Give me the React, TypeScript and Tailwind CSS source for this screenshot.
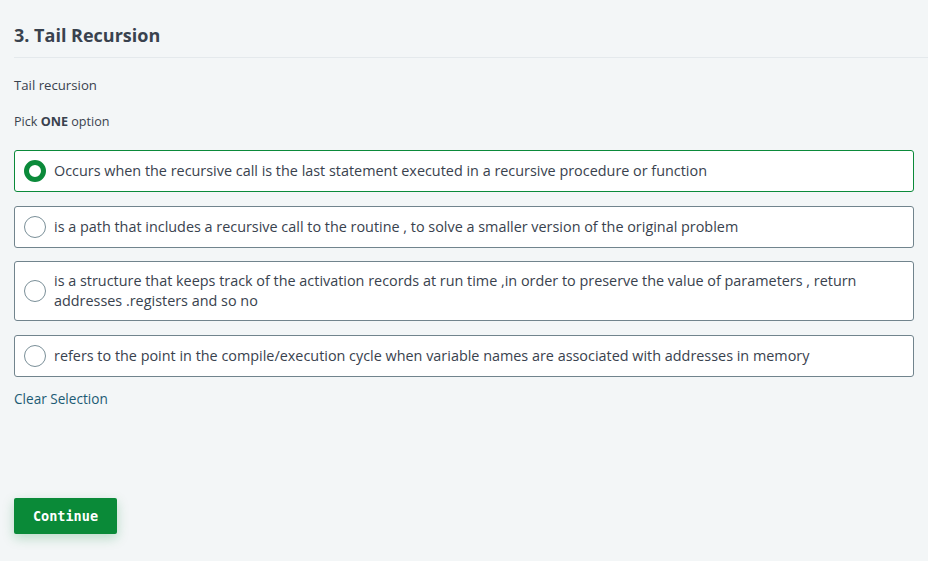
import { useState } from 'react';

const options = [
  'Occurs when the recursive call is the last statement executed in a recursive procedure or function',
  'is a path that includes a recursive call to the routine , to solve a smaller version of the original problem',
  'is a structure that keeps track of the activation records at run time ,in order to preserve the value of parameters , return addresses .registers and so no',
  'refers to the point in the compile/execution cycle when variable names are associated with addresses in memory',
];

export default function App() {
  const [selected, setSelected] = useState<number | null>(0);

  return (
    <div className="min-h-[561px] bg-[#f3f6f7] pl-[14px] text-[#39424e] font-['Open_Sans',sans-serif]">
      {/* header */}
      <div className="border-b border-[#e4e9ec] pt-[22px] pb-[9px]">
        <h2 className="text-[18px] font-bold leading-[26px]">3. Tail Recursion</h2>
      </div>

      <div className="pr-[14px]">
        <p className="mt-[17px] text-[13.2px] leading-[20px]">Tail recursion</p>
        <p className="mt-[17px] text-[12.6px] leading-[20px]">
          Pick <span className="font-bold">ONE</span> option
        </p>

        <div className="mt-[18px] flex flex-col gap-[13.5px]">
          {options.map((opt, i) => {
            const active = selected === i;
            return (
              <label
                key={i}
                onClick={() => setSelected(i)}
                className={`flex cursor-pointer items-center gap-[8px] rounded-[3px] border bg-white py-[9px] pl-[9px] pr-[40px] ${
                  active ? 'border-[#0b8a3a]' : 'border-[#71848d]'
                }`}
              >
                <span
                  className={`box-border h-[22px] w-[22px] shrink-0 rounded-full ${
                    active ? 'border-[5px] border-[#0b8a3a]' : 'border-[1.5px] border-[#7a8f98]'
                  }`}
                />
                <span className="text-[14.4px] leading-[20px]">{opt}</span>
              </label>
            );
          })}
        </div>

        <button
          onClick={() => setSelected(null)}
          className="mt-[12px] text-[13.6px] leading-[20px] text-[#1c5b74]"
        >
          Clear Selection
        </button>

        <div className="mt-[88px]">
          <button className="h-[36px] w-[103px] rounded-[2px] bg-[#0a8a38] pt-[1px] text-[13.5px] font-bold text-white shadow-[0_4px_12px_rgba(10,138,56,0.25)] font-['DejaVu_Sans_Mono',monospace]">
            Continue
          </button>
        </div>
      </div>
    </div>
  );
}
